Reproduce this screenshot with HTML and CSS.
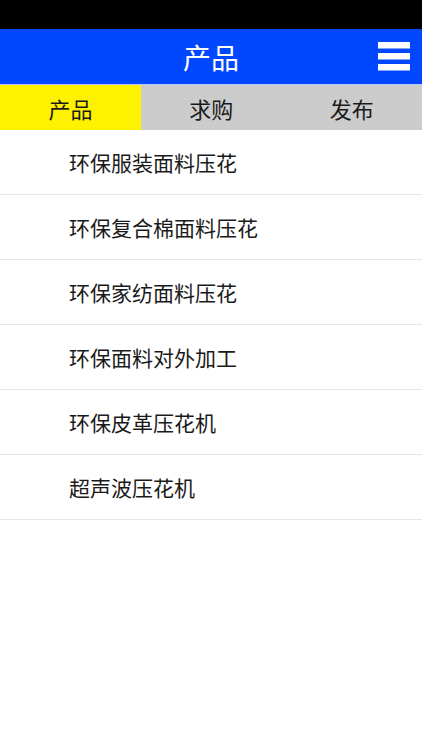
FILE: index.html
```html
<!DOCTYPE html>
<html lang="zh">
<head>
<meta charset="utf-8">
<link rel="stylesheet" href="styles.css">
</head>
<body>
<div class="status"></div>
<header class="topbar">
  <h1 class="title">产品</h1>
  <svg class="menu" width="32" height="29" viewBox="0 0 32 29">
    <rect x="0" y="0" width="32" height="6.5" fill="#fff"/>
    <rect x="0" y="11" width="32" height="6.5" fill="#fff"/>
    <rect x="0" y="22" width="32" height="6.5" fill="#fff"/>
  </svg>
</header>
<nav class="tabs">
  <div class="tab active">产品</div>
  <div class="tab">求购</div>
  <div class="tab">发布</div>
</nav>
<ul class="list">
  <li class="item">环保服装面料压花</li>
  <li class="item">环保复合棉面料压花</li>
  <li class="item">环保家纺面料压花</li>
  <li class="item">环保面料对外加工</li>
  <li class="item">环保皮革压花机</li>
  <li class="item">超声波压花机</li>
</ul>
</body>
</html>
```
FILE: styles.css
```css
* { box-sizing: border-box; }
html, body { margin: 0; padding: 0; background: #fff; }
body {
  font-family: "Noto Sans CJK SC", "Noto Sans", sans-serif;
  color: #1a1a1a;
}
.status { height: 29px; background: #000; }
.topbar {
  height: 56px;
  background: #0047ff;
  display: flex;
  align-items: center;
  justify-content: center;
  position: relative;
  border-bottom: 1px solid #b8c8ff;
}
.title {
  margin: 0;
  color: #fff;
  font-size: 28px;
  font-weight: 400;
  line-height: 1;
}
.menu {
  position: absolute;
  right: 12px;
  top: 13px;
}
.tabs {
  display: grid;
  grid-template-columns: 141px 1fr 1fr;
  height: 45px;
  background: #cccccc;
}
.tab {
  display: flex;
  align-items: center;
  justify-content: center;
  font-size: 22px;
  color: #1a1a1a;
}
.tab.active { background: #fff200; }
.list { list-style: none; margin: 0; padding: 0; }
.item {
  height: 65px;
  display: flex;
  align-items: center;
  padding-left: 69px;
  font-size: 21px;
  border-bottom: 1px solid #e6e6e6;
}
```
